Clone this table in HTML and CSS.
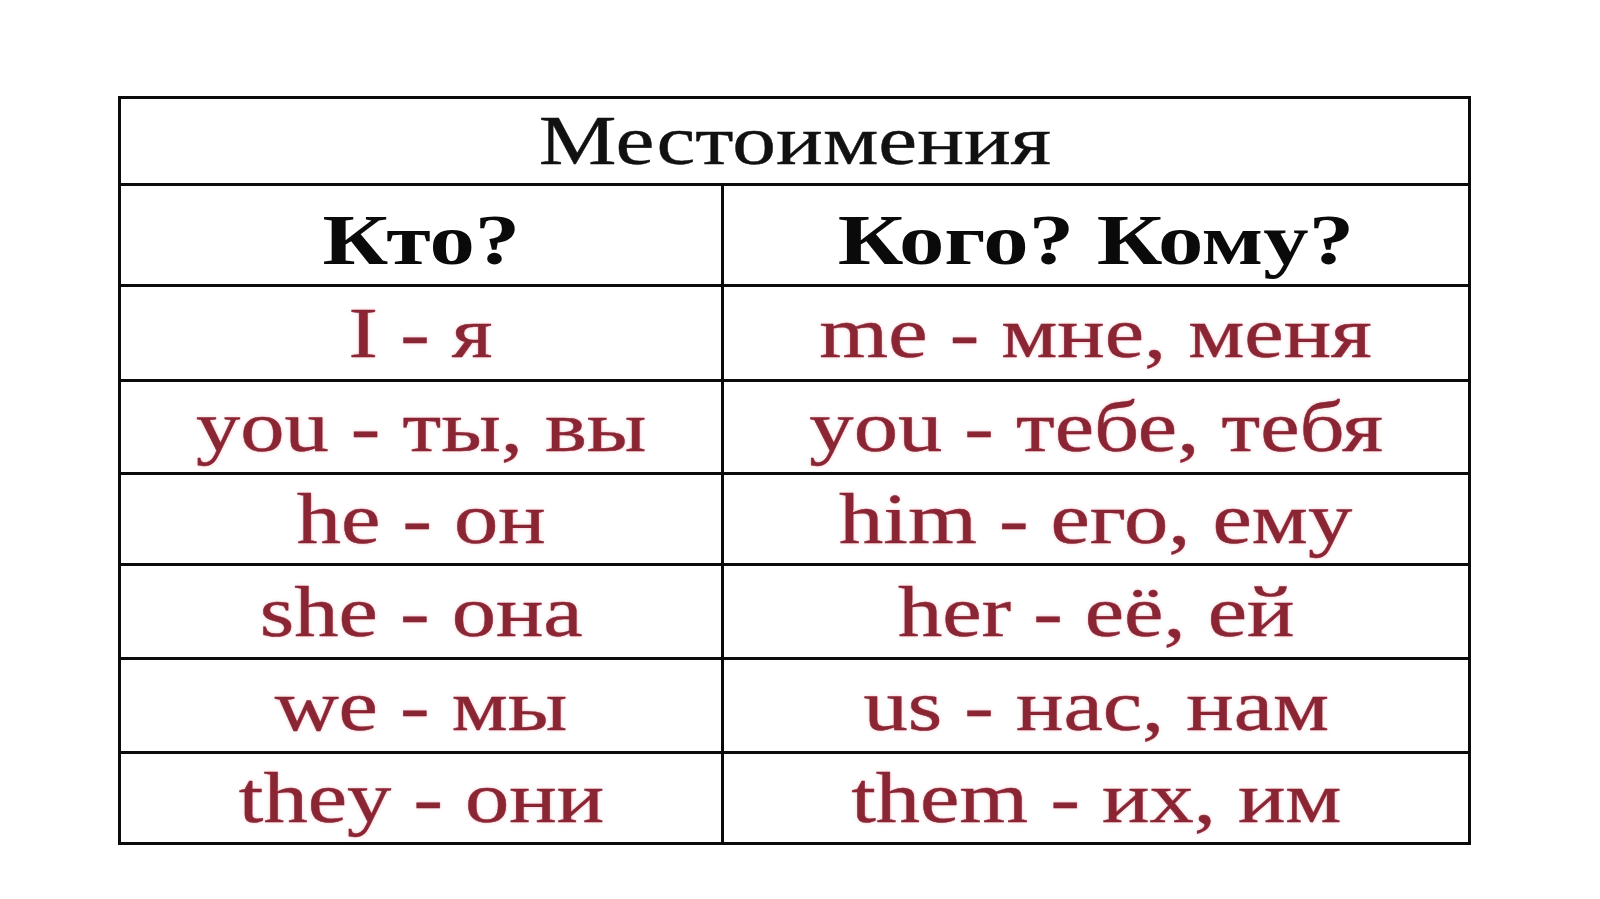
FILE: index.html
```html
<!DOCTYPE html>
<html lang="ru">
<head>
<meta charset="utf-8">
<title>Местоимения</title>
<link rel="stylesheet" href="styles.css">
</head>
<body>
<table class="pronouns">
  <colgroup><col class="c1"><col class="c2"></colgroup>
  <tr class="r-title"><td colspan="2"><span class="t title">Местоимения</span></td></tr>
  <tr class="r-head"><td><span class="t head">Кто?</span></td><td><span class="t head">Кого? Кому?</span></td></tr>
  <tr class="r1"><td><span class="t d">I - я</span></td><td><span class="t d">me - мне, меня</span></td></tr>
  <tr class="r2"><td><span class="t d">you - ты, вы</span></td><td><span class="t d">you - тебе, тебя</span></td></tr>
  <tr class="r3"><td><span class="t d">he - он</span></td><td><span class="t d">him - его, ему</span></td></tr>
  <tr class="r4"><td><span class="t d">she - она</span></td><td><span class="t d">her - её, ей</span></td></tr>
  <tr class="r5"><td><span class="t d">we - мы</span></td><td><span class="t d">us - нас, нам</span></td></tr>
  <tr class="r6"><td><span class="t d">they - они</span></td><td><span class="t d">them - их, им</span></td></tr>
</table>
</body>
</html>
```
FILE: styles.css
```css
html, body {
  margin: 0;
  padding: 0;
  background: #fff;
}
body {
  padding: 96px 0 0 118px;
  font-family: "Liberation Serif", "Times New Roman", serif;
}
.pronouns {
  border-collapse: collapse;
  width: 1350px;
  table-layout: fixed;
}
.pronouns col.c1 { width: 603px; }
.pronouns col.c2 { width: 747px; }
.pronouns td {
  border: 3px solid #0b0b0b;
  text-align: center;
  vertical-align: middle;
  padding: 0;
  line-height: 1;
  white-space: nowrap;
}
.r-title td { height: 84px; }
.r-head td { height: 98px; }
.r1 td { height: 92px; }
.r2 td { height: 90px; }
.r3 td { height: 88px; }
.r4 td { height: 91px; }
.r5 td { height: 91px; }
.r6 td { height: 88px; }
.t {
  display: inline-block;
  transform: scaleX(1.23);
}
.title {
  font-size: 70px;
  color: #111;
  transform: scaleX(1.25);
  -webkit-text-stroke: 0.4px #111;
}
.head {
  font-size: 72px;
  font-weight: bold;
  color: #0a0a0a;
  transform: scaleX(1.26);
  position: relative;
  top: 5px;
}
.d {
  font-size: 72px;
  color: #8a2634;
  -webkit-text-stroke: 0.4px #8a2634;
  text-shadow: 0 0 3px rgba(235, 120, 140, 0.55);
}
```
